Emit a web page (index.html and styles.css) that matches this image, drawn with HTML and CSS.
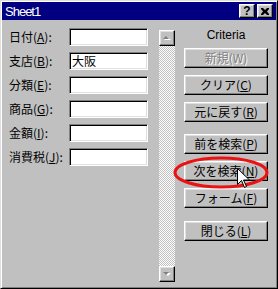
FILE: index.html
```html
<!DOCTYPE html>
<html lang="ja">
<head>
<meta charset="utf-8">
<title>Sheet1</title>
<link rel="stylesheet" href="styles.css">
</head>
<body>
<div class="dialog">
  <div class="titlebar">
    <span class="title">Sheet1</span>
    <div class="tb-buttons">
      <span class="tb-btn help">?</span>
      <span class="tb-btn close">
        <svg width="8" height="7" viewBox="0 0 8 7"><path d="M0 0h2l2 2 2-2h2v1l-2 2.5 2 2.5v1h-2l-2-2-2 2h-2v-1l2-2.5-2-2.5z" fill="#000"/></svg>
      </span>
    </div>
  </div>
  <div class="body">
    <div class="fields">
      <div class="row"><span class="label">日付(<u>A</u>):</span><div class="field"></div></div>
      <div class="row"><span class="label">支店(<u>B</u>):</span><div class="field">大阪</div></div>
      <div class="row"><span class="label">分類(<u>E</u>):</span><div class="field"></div></div>
      <div class="row"><span class="label">商品(<u>G</u>):</span><div class="field"></div></div>
      <div class="row"><span class="label">金額(<u>I</u>):</span><div class="field"></div></div>
      <div class="row"><span class="label">消費税(<u>J</u>):</span><div class="field"></div></div>
    </div>
    <div class="scrollbar">
      <div class="sb-btn">
        <svg width="8" height="5" viewBox="0 0 8 5"><path d="M4 1 1 4h7z" fill="#fff"/><path d="M3 0 0 3h6z" fill="#808080"/></svg>
      </div>
      <div class="sb-track"></div>
      <div class="sb-btn">
        <svg width="8" height="5" viewBox="0 0 8 5"><path d="M1 1h7L5 4z" fill="#fff"/><path d="M0 0h6L3 3z" fill="#808080"/></svg>
      </div>
    </div>
    <div class="actions">
      <div class="criteria">Criteria</div>
      <div class="group">
        <div class="btn disabled">新規(W)</div>
        <div class="btn">クリア(<u>C</u>)</div>
        <div class="btn">元に戻す(<u>R</u>)</div>
      </div>
      <div class="group g2">
        <div class="btn">前を検索(<u>P</u>)</div>
        <div class="btn">次を検索(<u>N</u>)</div>
        <div class="btn">フォーム(<u>F</u>)</div>
      </div>
      <div class="group g3">
        <div class="btn">閉じる(<u>L</u>)</div>
      </div>
    </div>
  </div>
  <svg class="overlay" width="278" height="289" viewBox="0 0 278 289">
    <ellipse cx="221" cy="172.5" rx="46" ry="14.5" fill="none" stroke="#ea1212" stroke-width="3"/>
    <path d="M237.5 168.5v16l4-4 3 7 2-1-3-6.5h6z" fill="#fff" stroke="#000" stroke-width="1"/>
  </svg>
</div>
</body>
</html>
```
FILE: styles.css
```css
* { box-sizing: border-box; }

body {
  margin: 0;
  font-family: "Noto Sans CJK JP", "Noto Sans", sans-serif;
  font-size: 12px;
  color: #000;
  background: #c0c0c0;
}

.dialog {
  position: relative;
  width: 278px;
  height: 289px;
  background: #c0c0c0;
  border: 1px solid;
  border-color: #dfdfdf #000 #000 #dfdfdf;
  box-shadow: inset 1px 1px #fff, inset -1px -1px #808080;
  padding: 1px;
  display: flex;
  flex-direction: column;
}

.titlebar {
  height: 18px;
  background: #000080;
  color: #fff;
  display: flex;
  align-items: center;
  padding: 0 3px 0 3px;
}

.title {
  flex: 1;
  font-family: "Liberation Sans", Arial, sans-serif;
  font-size: 13px;
  letter-spacing: -1px;
}

.tb-buttons {
  display: flex;
  gap: 2px;
}

.tb-btn {
  width: 16px;
  height: 14px;
  background: #c0c0c0;
  border: 1px solid;
  border-color: #fff #000 #000 #fff;
  box-shadow: inset -1px -1px #808080, inset 1px 1px #dfdfdf;
  display: flex;
  align-items: center;
  justify-content: center;
  color: #000;
  font-family: "Liberation Sans", Arial, sans-serif;
  font-weight: bold;
  font-size: 12px;
  line-height: 1;
}

.body {
  flex: 1;
  display: flex;
}

.fields {
  width: 157px;
  padding: 8px 0 0 7px;
  display: flex;
  flex-direction: column;
  gap: 6px;
}

.row {
  display: flex;
  align-items: center;
  height: 18px;
}

.label {
  width: 60px;
  white-space: nowrap;
  line-height: 1;
}

.field {
  width: 79px;
  height: 18px;
  background: #fff;
  border: 1px solid;
  border-color: #808080 #fff #fff #808080;
  box-shadow: inset 1px 1px #000, inset -1px -1px #dfdfdf;
  padding: 0 2px;
  line-height: 16px;
  white-space: nowrap;
}

u {
  text-decoration: underline;
  text-underline-offset: 1px;
}

.scrollbar {
  margin-top: 10px;
  width: 16px;
  height: 252px;
  display: flex;
  flex-direction: column;
}

.sb-btn {
  height: 16px;
  flex: none;
  background: #c0c0c0;
  border: 1px solid;
  border-color: #fff #000 #000 #fff;
  box-shadow: inset -1px -1px #808080, inset 1px 1px #dfdfdf;
  display: flex;
  align-items: center;
  justify-content: center;
}

.sb-track {
  flex: 1;
  background: repeating-conic-gradient(#c0c0c0 0 25%, #fff 0 50%) 0 0 / 2px 2px;
}

.actions {
  width: 84px;
  margin-left: 9px;
  padding-top: 8px;
  display: flex;
  flex-direction: column;
}

.criteria {
  height: 14px;
  line-height: 14px;
  margin-bottom: 6px;
  text-align: center;
  font-family: "Liberation Sans", Arial, sans-serif;
  font-size: 12px;
}

.group {
  display: flex;
  flex-direction: column;
  gap: 7px;
}

.g2 { margin-top: 12px; }
.g3 { margin-top: 13px; }

.btn {
  height: 20px;
  background: #c0c0c0;
  border: 1px solid;
  border-color: #fff #000 #000 #fff;
  box-shadow: inset -1px -1px #808080, inset 1px 1px #dfdfdf;
  display: flex;
  align-items: center;
  justify-content: center;
  line-height: 1;
  white-space: nowrap;
}

.btn.disabled {
  color: #808080;
  text-shadow: 1px 1px 0 #fff;
}

.overlay {
  position: absolute;
  left: -1px;
  top: -1px;
  pointer-events: none;
}
```
